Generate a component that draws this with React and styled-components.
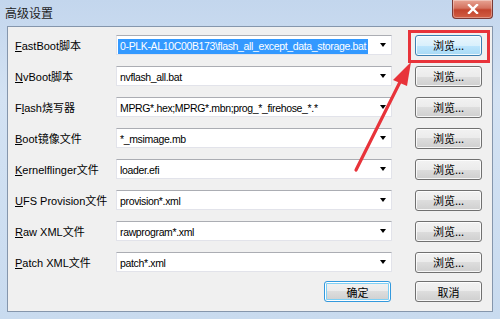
import React from "react";
import styled, { createGlobalStyle } from "styled-components";

const GlobalStyle = createGlobalStyle`
  html, body {
    margin: 0;
    padding: 0;
    background: #ffffff;
  }
  body {
    font-family: "Liberation Sans", "Noto Sans CJK SC", sans-serif;
  }
`;

const rows = [
  { key: "F", rest: "astBoot脚本", value: "0-PLK-AL10C00B173\\flash_all_except_data_storage.bat", selected: true },
  { key: "N", rest: "vBoot脚本", value: "nvflash_all.bat" },
  { pre: "F", key: "l", rest: "ash烧写器", value: "MPRG*.hex;MPRG*.mbn;prog_*_firehose_*.*" },
  { key: "B", rest: "oot镜像文件", value: "*_msimage.mb" },
  { key: "K", rest: "ernelflinger文件", value: "loader.efi" },
  { key: "U", rest: "FS Provision文件", value: "provision*.xml" },
  { key: "R", rest: "aw XML文件", value: "rawprogram*.xml" },
  { key: "P", rest: "atch XML文件", value: "patch*.xml" },
];

function App() {
  return (
    <>
      <GlobalStyle />
      <Window>
        <TitleBar>
          <Title>高级设置</Title>
          <CloseButton>
            <svg width="12" height="10" viewBox="0 0 12 10">
              <path d="M2 1 L10 9 M10 1 L2 9" stroke="#ffffff" strokeWidth="2.4" strokeLinecap="square" />
            </svg>
          </CloseButton>
        </TitleBar>
        <Client>
          <Form>
            {rows.map((r, i) => (
              <React.Fragment key={i}>
                <Label>
                  {r.pre}
                  <u>{r.key}</u>
                  {r.rest}
                </Label>
                <Combo>
                  <ComboText>
                    <Value $selected={r.selected}>{r.value}</Value>
                  </ComboText>
                  <Arrow />
                </Combo>
                <Button $hot={i === 0}>浏览...</Button>
              </React.Fragment>
            ))}
          </Form>
          <Footer>
            <Button $default>确定</Button>
            <Button>取消</Button>
          </Footer>
        </Client>
        <Highlight />
        <Pointer width="500" height="319" viewBox="0 0 500 319">
          <path d="M356 170 L400 82" stroke="#e8333a" strokeWidth="3.2" strokeLinecap="round" />
          <polygon points="411,62 393,80 407,86" fill="#e8333a" />
        </Pointer>
      </Window>
    </>
  );
}

const Window = styled.div`
  position: relative;
  width: 500px;
  height: 319px;
  box-sizing: border-box;
  display: flex;
  flex-direction: column;
  background: linear-gradient(180deg, #c3d6ed 0%, #d3e2f3 30%, #c9dbef 100%);
  overflow: hidden;
`;

const TitleBar = styled.div`
  height: 27px;
  display: flex;
  align-items: flex-start;
  justify-content: space-between;
  padding: 0 7px 0 5px;
`;

const Title = styled.div`
  margin-top: 5px;
  font-family: "Noto Sans CJK SC", sans-serif;
  font-size: 12px;
  line-height: 16px;
  color: #1e1e1e;
`;

const CloseButton = styled.div`
  width: 41px;
  height: 19px;
  box-sizing: border-box;
  display: flex;
  align-items: center;
  justify-content: center;
  border: 1px solid #7a3a36;
  border-top: none;
  border-radius: 0 0 4px 4px;
  background: linear-gradient(180deg, #e8a494 0%, #d4725f 45%, #c2432c 55%, #d25f44 100%);
  box-shadow: inset 0 0 0 1px rgba(255, 255, 255, 0.35);
`;

const Client = styled.div`
  flex: 1;
  margin: 0 7px 7px 7px;
  box-sizing: border-box;
  background: #f0f0f0;
  border: 1px solid #8596ac;
  padding: 8px 10px 9px 7px;
  display: flex;
  flex-direction: column;
`;

const Form = styled.div`
  display: grid;
  grid-template-columns: 101px 276px 1fr;
  grid-auto-rows: 20px;
  row-gap: 11px;
  align-items: center;
`;

const Label = styled.div`
  font-size: 11px;
  color: #000000;
  white-space: nowrap;
  u {
    text-decoration: underline;
    text-underline-offset: 1px;
  }
`;

const Combo = styled.div`
  height: 20px;
  box-sizing: border-box;
  display: flex;
  align-items: center;
  background: #ffffff;
  border: 1px solid #e2e3ea;
  border-top-color: #abadb3;
  padding: 0 5px 0 1px;
`;

const ComboText = styled.div`
  flex: 1;
  min-width: 0;
  overflow: hidden;
  white-space: nowrap;
`;

const Value = styled.span`
  display: inline-block;
  font-size: 10.5px;
  line-height: 15px;
  padding: 0 2px;
  letter-spacing: -0.35px;
  color: ${(p) => (p.$selected ? "#ffffff" : "#000000")};
  background: ${(p) => (p.$selected ? "#3399ff" : "transparent")};
`;

const Arrow = styled.span`
  width: 0;
  height: 0;
  margin-left: 8px;
  border-left: 3.5px solid transparent;
  border-right: 3.5px solid transparent;
  border-top: 4px solid #000000;
`;

const Button = styled.div`
  justify-self: end;
  width: 67px;
  height: 21px;
  box-sizing: border-box;
  display: flex;
  align-items: center;
  justify-content: center;
  font-family: "Noto Sans CJK SC", sans-serif;
  font-size: 11px;
  color: #000000;
  border-radius: 3px;
  border: 1px solid ${(p) => (p.$hot ? "#3c7fb1" : p.$default ? "#3399dd" : "#707070")};
  background: ${(p) =>
    p.$hot
      ? "linear-gradient(180deg, #eaf6fd 0%, #d9f0fc 50%, #bee6fd 50%, #a7d9f5 100%)"
      : "linear-gradient(180deg, #f2f2f2 0%, #ebebeb 50%, #dddddd 50%, #cfcfcf 100%)"};
  box-shadow: ${(p) =>
    p.$default
      ? "inset 0 0 0 1px #ffffff, inset 0 0 0 2px #7fd0f5"
      : "inset 0 0 0 1px rgba(255, 255, 255, 0.8)"};
`;

const Footer = styled.div`
  margin-top: 9px;
  display: flex;
  justify-content: flex-end;
  gap: 24px;
`;

const Highlight = styled.div`
  position: absolute;
  left: 408px;
  top: 30px;
  width: 82px;
  height: 33px;
  box-sizing: border-box;
  border: 3px solid #e8333a;
`;

const Pointer = styled.svg`
  position: absolute;
  left: 0;
  top: 0;
  pointer-events: none;
`;

export default App;
